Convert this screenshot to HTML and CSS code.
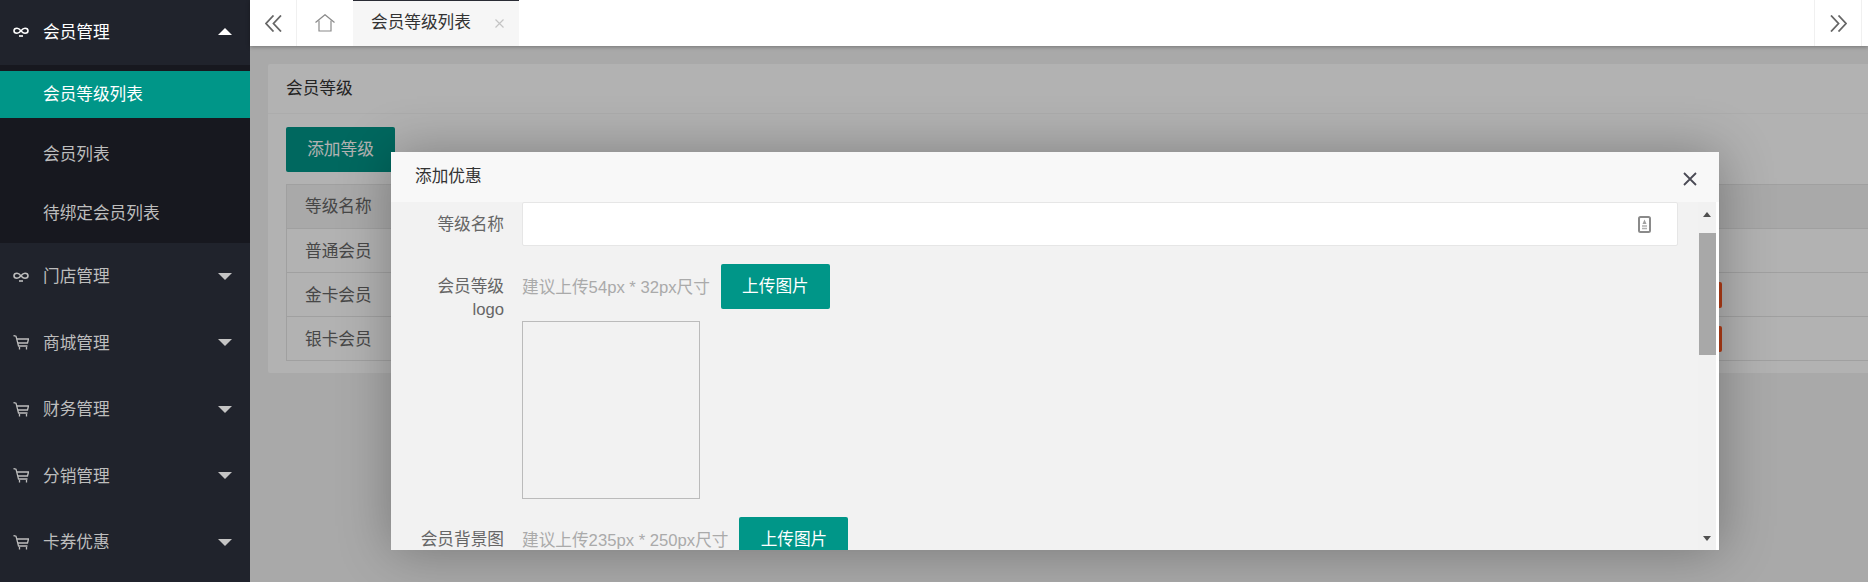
FILE: index.html
```html
<!DOCTYPE html>
<html lang="zh-CN">
<head>
  <meta charset="UTF-8">
  <meta name="viewport" content="width=device-width, initial-scale=1.0">
  <title>会员等级列表</title>
  <link rel="stylesheet" href="styles.css">
</head>
<body>
  <div class="app">
    <aside class="sidebar">
      <div class="nav-head nav-head-first active">
        <svg class="nav-icon nav-icon-loop" viewBox="0 -3 16 15"><path d="M8 4C6.500 2 5.500 1.200 4 1.200 2.400 1.200 1 2.300 1 3.800S2.400 6.300 4 6.300C5.500 6.300 6.500 5.500 8 3.700 9.500 1.900 10.500 1.200 12 1.200 13.600 1.200 15 2.300 15 3.800S13.600 6.300 12 6.300C10.500 6.300 9.500 5.500 8 4Z"/><path d="M6 9H10"/></svg>
        <span class="nav-text">会员管理</span>
        <i class="caret caret-up"></i>
      </div>
      <ul class="subnav">
        <li class="subnav-item selected">会员等级列表</li>
        <li class="subnav-item">会员列表</li>
        <li class="subnav-item">待绑定会员列表</li>
      </ul>
      <div class="nav-head">
        <svg class="nav-icon nav-icon-loop" viewBox="0 -3 16 15"><path d="M8 4C6.500 2 5.500 1.200 4 1.200 2.400 1.200 1 2.300 1 3.800S2.400 6.300 4 6.300C5.500 6.300 6.500 5.500 8 3.700 9.500 1.900 10.500 1.200 12 1.200 13.600 1.200 15 2.300 15 3.800S13.600 6.300 12 6.300C10.500 6.300 9.500 5.500 8 4Z"/><path d="M6 9H10"/></svg>
        <span class="nav-text">门店管理</span>
        <i class="caret"></i>
      </div>
      <div class="nav-head">
        <svg class="nav-icon" viewBox="0 0 16 15"><path d="M.5.500 3 1.200 5.500 11H14.500"/><path d="M3.900 4H15.500L14.500 8H5"/><path d="M6.500 12V14.500M13.500 12V14.500"/></svg>
        <span class="nav-text">商城管理</span>
        <i class="caret"></i>
      </div>
      <div class="nav-head">
        <svg class="nav-icon" viewBox="0 0 16 15"><path d="M.5.500 3 1.200 5.500 11H14.500"/><path d="M3.900 4H15.500L14.500 8H5"/><path d="M6.500 12V14.500M13.500 12V14.500"/></svg>
        <span class="nav-text">财务管理</span>
        <i class="caret"></i>
      </div>
      <div class="nav-head">
        <svg class="nav-icon" viewBox="0 0 16 15"><path d="M.5.500 3 1.200 5.500 11H14.500"/><path d="M3.900 4H15.500L14.500 8H5"/><path d="M6.500 12V14.500M13.500 12V14.500"/></svg>
        <span class="nav-text">分销管理</span>
        <i class="caret"></i>
      </div>
      <div class="nav-head">
        <svg class="nav-icon" viewBox="0 0 16 15"><path d="M.5.500 3 1.200 5.500 11H14.500"/><path d="M3.900 4H15.500L14.500 8H5"/><path d="M6.500 12V14.500M13.500 12V14.500"/></svg>
        <span class="nav-text">卡券优惠</span>
        <i class="caret"></i>
      </div>
    </aside>

    <main class="main">
      <header class="tabbar">
        <div class="tab-btn tab-prev">
          <svg class="tab-icon" viewBox="0 0 17 17"><path d="M8.500 .5 1 8.500 8.500 16.500M16 .5 8.500 8.500 16 16.500"/></svg>
        </div>
        <div class="tab-home">
          <svg class="home-icon" viewBox="0 0 20 18"><path d="M.5 8.500 10 .7 19.500 8.500"/><path d="M4 6.500V17H16V6.500"/></svg>
        </div>
        <div class="tab-item">
          <span>会员等级列表</span>
          <svg class="tab-close" viewBox="0 0 9 9"><path d="M.5 .5 8.500 8.500M8.500 .5 .5 8.500"/></svg>
        </div>
        <div class="tab-spacer"></div>
        <div class="tab-btn tab-next">
          <svg class="tab-icon" viewBox="0 0 17 17"><path d="M1 .5 8.500 8.500 1 16.500M8.500 .5 16 8.500 8.500 16.500"/></svg>
        </div>
      </header>

      <section class="content">
        <div class="card">
          <div class="card-header">会员等级</div>
          <div class="card-body">
            <button class="btn">添加等级</button>
            <table class="level-table">
              <thead>
                <tr><th class="col-name">等级名称</th><th></th><th class="col-action"></th></tr>
              </thead>
              <tbody>
                <tr><td>普通会员</td><td></td><td></td></tr>
                <tr><td>金卡会员</td><td></td><td><span class="btn-danger"></span></td></tr>
                <tr><td>银卡会员</td><td></td><td><span class="btn-danger"></span></td></tr>
              </tbody>
            </table>
          </div>
        </div>

        <div class="shade"></div>

        <div class="modal">
          <div class="modal-title">
            <span class="modal-title-text">添加优惠</span>
            <svg class="modal-close" viewBox="0 0 14 14"><path d="M1 1 13 13M13 1 1 13"/></svg>
          </div>
          <div class="modal-main">
            <form class="form">
              <div class="form-row">
                <label class="form-label">等级名称</label>
                <div class="fake-input">
                  <svg class="input-icon" viewBox="0 0 13 17"><rect x="1" y="1" width="11" height="15" rx="1.500"/><path class="input-icon-fill" d="M6.500 3.500 8.500 8H4.500Z"/><path d="M4 10H9M4 12.500H9"/></svg>
                </div>
              </div>
              <div class="form-row">
                <label class="form-label">会员等级<br>logo</label>
                <div class="upload">
                  <div class="upload-line">
                    <span class="hint">建议上传54px * 32px尺寸</span>
                    <button type="button" class="btn">上传图片</button>
                  </div>
                  <div class="preview"></div>
                </div>
              </div>
              <div class="form-row">
                <label class="form-label">会员背景图</label>
                <div class="upload">
                  <div class="upload-line">
                    <span class="hint">建议上传235px * 250px尺寸</span>
                    <button type="button" class="btn">上传图片</button>
                  </div>
                </div>
              </div>
            </form>
            <div class="scrollbar">
              <i class="scroll-arrow scroll-up"></i>
              <div class="scroll-thumb"></div>
              <i class="scroll-arrow scroll-down"></i>
            </div>
          </div>
        </div>
      </section>
    </main>
  </div>
</body>
</html>
```

FILE: styles.css
```css
/* General */
* {
  box-sizing: border-box;
}

body {
  margin: 0;
  font-family: "Liberation Sans", "Noto Sans CJK SC", sans-serif;
  font-size: 16.67px;
  color: #666;
}

.app {
  display: flex;
  height: 582px;
  overflow: hidden;
}

/* Sidebar */
.sidebar {
  flex: 0 0 250px;
  background: #20232c;
  color: #bdbdbd;
}

.nav-head {
  display: flex;
  align-items: center;
  height: 66.5px;
  padding: 0 18px 0 13px;
}

.nav-head-first {
  height: 65px;
  padding-bottom: 3px;
}

.nav-head.active {
  color: #fff;
}

.nav-icon {
  flex: none;
  width: 16px;
  height: 15px;
  margin-right: 14px;
  fill: none;
  stroke: currentColor;
  stroke-width: 1.3;
}

.nav-icon-loop {
  stroke-width: 1.6;
}

.nav-text {
  flex: 1;
  margin-bottom: 2px;
}

.nav-head-first .nav-text {
  margin-bottom: 0;
}

.caret {
  width: 0;
  height: 0;
  border-left: 7px solid transparent;
  border-right: 7px solid transparent;
  border-top: 7px solid #c4c4c4;
}

.caret-up {
  border-top: 0;
  border-bottom: 7px solid #fff;
}

.subnav {
  display: flex;
  flex-direction: column;
  gap: 12.5px;
  margin: 0;
  padding: 6px 0;
  list-style: none;
  background: #17181f;
}

.subnav-item {
  height: 47px;
  padding-left: 43px;
  line-height: 47px;
}

.subnav-item.selected {
  background: #009688;
  color: #fff;
}

/* Tabs */
.main {
  flex: 1;
  min-width: 0;
  display: flex;
  flex-direction: column;
}

.tabbar {
  position: relative;
  z-index: 3;
  flex: 0 0 46px;
  display: flex;
  background: #fff;
  box-shadow: 0 1px 4px rgba(0, 0, 0, 0.3);
}

.tab-btn {
  display: flex;
  align-items: center;
  justify-content: center;
  width: 47px;
}

.tab-prev {
  border-right: 1px solid #f0f0f0;
}

.tab-next {
  width: 48px;
  margin-right: 6px;
  border-left: 1px solid #f0f0f0;
  border-right: 1px solid #f0f0f0;
}

.tab-icon {
  width: 17px;
  height: 17px;
  fill: none;
  stroke: #666;
  stroke-width: 1.8;
}

.tab-home {
  display: flex;
  align-items: center;
  justify-content: center;
  width: 56px;
}

.home-icon {
  width: 20px;
  height: 18px;
  fill: none;
  stroke: #8a8a8a;
  stroke-width: 1.2;
}

.tab-item {
  display: flex;
  align-items: center;
  width: 166px;
  padding: 0 0 6px 18px;
  background: #f6f6f6;
  border-top: 1px solid #292b34;
  color: #333;
}

.tab-close {
  width: 9px;
  height: 9px;
  margin: 6px 0 0 24px;
  fill: none;
  stroke: #c4c4c4;
  stroke-width: 1.2;
}

.tab-spacer {
  flex: 1;
}

/* Content */
.content {
  position: relative;
  flex: 1;
  padding: 18px 0 0 18px;
  background: #f2f2f2;
  overflow: hidden;
}

.card {
  margin-right: -40px;
  background: #fff;
  border-radius: 2px;
}

.card-header {
  height: 50px;
  padding-left: 18px;
  line-height: 50px;
  border-bottom: 1px solid #f6f6f6;
  color: #333;
}

.card-body {
  padding: 13px 18px 12px;
}

/* Buttons */
.btn {
  display: block;
  flex: none;
  width: 109px;
  height: 45px;
  padding: 0 0 3px;
  border: none;
  border-radius: 2px;
  background: #009688;
  color: #fff;
  font: inherit;
}

.btn-danger {
  display: block;
  width: 72px;
  height: 26px;
  border-radius: 2px;
  background: #ff5722;
}

/* Table */
.level-table {
  width: 100%;
  margin-top: 12px;
  border-collapse: collapse;
  table-layout: fixed;
}

.level-table th,
.level-table td {
  height: 44px;
  padding: 0 0 2px 18px;
  border: 1px solid #e6e6e6;
  font-weight: normal;
  text-align: left;
}

.level-table th {
  padding-bottom: 4px;
  background: #f2f2f2;
}

.level-table th:nth-child(n+2),
.level-table td:nth-child(n+2) {
  border-left: 0;
}

.level-table .col-name {
  width: 120px;
}

.level-table .col-action {
  width: 250px;
}

.level-table td:last-child {
  padding: 0 0 0 10px;
}

/* Modal */
.shade {
  position: absolute;
  top: 0;
  left: 0;
  right: 0;
  bottom: 0;
  background: rgba(0, 0, 0, 0.3);
}

.modal {
  position: absolute;
  top: 106px;
  left: 141px;
  width: 1328px;
  height: 398px;
  display: flex;
  flex-direction: column;
  background: #f2f2f2;
  box-shadow: 1px 1px 50px rgba(0, 0, 0, 0.3);
}

.modal-title {
  flex: 0 0 50px;
  display: flex;
  align-items: center;
  justify-content: space-between;
  padding: 0 22px 0 24px;
  background: #f8f8f8;
  color: #333;
}

.modal-title-text {
  margin-bottom: 4px;
}

.modal-close {
  width: 14px;
  height: 14px;
  margin-top: 3px;
  fill: none;
  stroke: #4a4a55;
  stroke-width: 1.8;
}

.modal-main {
  flex: 1;
  min-height: 0;
  display: flex;
  overflow: hidden;
}

.form {
  flex: 1;
  min-width: 0;
  padding-right: 20px;
}

.form-row {
  display: flex;
  margin-bottom: 18px;
}

.form-label {
  flex: 0 0 113px;
  margin-right: 18px;
  padding-top: 11px;
  line-height: 23px;
  text-align: right;
}

.fake-input {
  flex: 1;
  height: 44px;
  display: flex;
  align-items: center;
  justify-content: flex-end;
  padding: 1px 26px 0 0;
  background: #fff;
  border: 1px solid #e6e6e6;
  border-radius: 2px;
}

.input-icon {
  width: 13px;
  height: 17px;
  fill: none;
  stroke: #8a8a8a;
  stroke-width: 2;
}

.input-icon path {
  stroke: #b0b0b0;
  stroke-width: 1.5;
}

.input-icon .input-icon-fill {
  fill: #a0a0a0;
  stroke: none;
}

.upload-line {
  display: flex;
  align-items: center;
  gap: 11px;
}

.hint {
  padding-bottom: 2px;
  color: #aaa;
}

.preview {
  width: 178px;
  height: 178px;
  margin-top: 12px;
  border: 1px solid #bbb;
}

/* Scrollbar */
.scrollbar {
  flex: 0 0 21px;
  display: flex;
  flex-direction: column;
  align-items: center;
  background: #f1f1f1;
  border-right: 3px solid #fff;
}

.scroll-thumb {
  width: 17px;
  height: 122px;
  margin-top: 16px;
  background: #a8a8a8;
}

.scroll-arrow {
  width: 0;
  height: 0;
  border-left: 4.500px solid transparent;
  border-right: 4.500px solid transparent;
}

.scroll-up {
  margin-top: 10px;
  border-bottom: 5px solid #505050;
}

.scroll-down {
  margin-top: auto;
  margin-bottom: 9px;
  border-top: 5px solid #505050;
}
```
